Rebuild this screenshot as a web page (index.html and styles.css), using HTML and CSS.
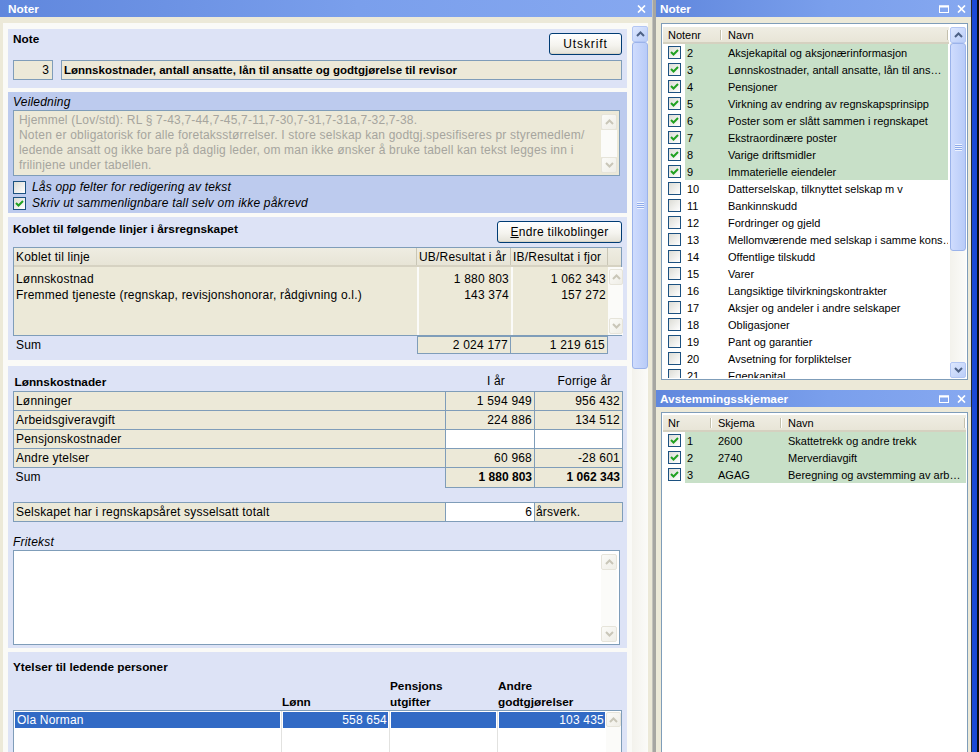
FILE: index.html
```html
<!DOCTYPE html>
<html lang="no">
<head>
<meta charset="utf-8">
<title>Noter</title>
<link rel="stylesheet" href="styles.css">
</head>
<body>
<svg class="defs" width="0" height="0" aria-hidden="true">
  <symbol id="i-up" viewBox="0 0 9 6"><polyline points="1,5 4.5,1.5 8,5" fill="none" stroke="currentColor" stroke-width="2"/></symbol>
  <symbol id="i-down" viewBox="0 0 9 6"><polyline points="1,1 4.5,4.5 8,1" fill="none" stroke="currentColor" stroke-width="2"/></symbol>
  <symbol id="i-check" viewBox="0 0 11 11"><polyline points="2,5 4.5,7.5 9,3" fill="none" stroke="#21a121" stroke-width="2"/></symbol>
  <symbol id="i-close" viewBox="0 0 9 8"><path d="M1 0.5 L8 7.5 M8 0.5 L1 7.5" stroke="#fff" stroke-width="1.7" fill="none"/></symbol>
  <symbol id="i-max" viewBox="0 0 10 8"><rect x="0.5" y="1" width="9" height="6.5" fill="none" stroke="#fff" stroke-width="1"/><rect x="0" y="0.5" width="10" height="2" fill="#fff"/></symbol>
</svg>

<div class="app">
  <section class="pane-left">
    <header class="titlebar tb-left">
      <span class="tb-title">Noter</span>
      <span class="tb-icons"><svg class="ic-close"><use href="#i-close"/></svg></span>
    </header>
    <div class="left-body">
      <div class="viewport">
        <div class="panels">

          <div class="panel p-note">
            <div class="note-top">
              <span class="lbl-bold">Note</span>
              <button class="xpbtn btn-print">Utskrift</button>
            </div>
            <div class="note-fields">
              <div class="field field-num">3</div>
              <div class="field field-title">Lønnskostnader, antall ansatte, lån til ansatte og godtgjørelse til revisor</div>
            </div>
          </div>

          <div class="panel p-guide">
            <div class="lbl-italic">Veiledning</div>
            <div class="memo memo-guide">
              <div class="memo-text">
                <div>Hjemmel (Lov/std): RL § 7-43,7-44,7-45,7-11,7-30,7-31,7-31a,7-32,7-38.</div>
                <div>Noten er obligatorisk for alle foretaksstørrelser. I store selskap kan godtgj.spesifiseres pr styremedlem/</div>
                <div>ledende ansatt og ikke bare på daglig leder, om man ikke ønsker å bruke tabell kan tekst legges inn i</div>
                <div>frilinjene under tabellen.</div>
              </div>
              <div class="sb sb-dis sb-memo">
                <span class="sb-btn"><svg class="chev"><use href="#i-up"/></svg></span>
                <span class="sb-track"></span>
                <span class="sb-btn"><svg class="chev"><use href="#i-down"/></svg></span>
              </div>
            </div>
            <div class="chk-row first"><span class="cb"></span><span>Lås opp felter for redigering av tekst</span></div>
            <div class="chk-row"><span class="cb"><svg class="ck"><use href="#i-check"/></svg></span><span>Skriv ut sammenlignbare tall selv om ikke påkrevd</span></div>
          </div>

          <div class="panel p-link">
            <div class="link-head">
              <span class="lbl-bold">Koblet til følgende linjer i årsregnskapet</span>
              <button class="xpbtn btn-link"><u>E</u>ndre tilkoblinger</button>
            </div>
            <div class="gbox">
              <div class="gb-header">
                <span class="gh gc1">Koblet til linje</span>
                <span class="gh gc2">UB/Resultat i år</span>
                <span class="gh gc3">IB/Resultat i fjor</span>
                <span class="gh gc4"></span>
              </div>
              <div class="gb-body">
                <div class="gb-rows">
                  <div class="gb-row"><span class="gc1">Lønnskostnad</span><span class="gc2 num">1 880 803</span><span class="gc3 num">1 062 343</span></div>
                  <div class="gb-row"><span class="gc1">Fremmed tjeneste (regnskap, revisjonshonorar, rådgivning o.l.)</span><span class="gc2 num">143 374</span><span class="gc3 num">157 272</span></div>
                  <div class="gb-row filler"><span class="gc1"></span><span class="gc2"></span><span class="gc3"></span></div>
                </div>
                <div class="sb sb-dis sb-grid">
                  <span class="sb-btn"><svg class="chev"><use href="#i-up"/></svg></span>
                  <span class="sb-track"></span>
                  <span class="sb-btn"><svg class="chev"><use href="#i-down"/></svg></span>
                </div>
              </div>
            </div>
            <div class="sum-row">
              <span class="sum-lbl">Sum</span>
              <span class="sum-cell sc-a">2 024 177</span>
              <span class="sum-cell sc-b">1 219 615</span>
            </div>
          </div>

          <div class="panel p-salary">
            <table class="sal">
              <colgroup><col class="col-lbl"><col class="col-v1"><col class="col-v2"></colgroup>
              <thead>
                <tr><th class="sal-title">Lønnskostnader</th><th class="sal-colh">I år</th><th class="sal-colh">Forrige år</th></tr>
              </thead>
              <tbody>
                <tr><td>Lønninger</td><td class="num">1 594 949</td><td class="num">956 432</td></tr>
                <tr><td>Arbeidsgiveravgift</td><td class="num">224 886</td><td class="num">134 512</td></tr>
                <tr><td>Pensjonskostnader</td><td class="num edit"></td><td class="num edit"></td></tr>
                <tr><td>Andre ytelser</td><td class="num">60 968</td><td class="num">-28 601</td></tr>
                <tr class="sum"><td class="sum-l">Sum</td><td class="num b">1 880 803</td><td class="num b">1 062 343</td></tr>
              </tbody>
            </table>
            <table class="sal emp">
              <colgroup><col class="col-lbl"><col class="col-v1"><col class="col-v2"></colgroup>
              <tbody>
                <tr><td>Selskapet har i regnskapsåret sysselsatt totalt</td><td class="num edit">6</td><td class="unit">årsverk.</td></tr>
              </tbody>
            </table>
            <div class="lbl-italic free-lbl">Fritekst</div>
            <div class="memo memo-free">
              <div class="memo-text"></div>
              <div class="sb sb-dis sb-memo">
                <span class="sb-btn"><svg class="chev"><use href="#i-up"/></svg></span>
                <span class="sb-track"></span>
                <span class="sb-btn"><svg class="chev"><use href="#i-down"/></svg></span>
              </div>
            </div>
          </div>

          <div class="panel p-exec">
            <div class="lbl-bold">Ytelser til ledende personer</div>
            <div class="exec-head">
              <span class="eh ec1"></span>
              <span class="eh ec2">Lønn</span>
              <span class="eh ec3">Pensjons<br>utgifter</span>
              <span class="eh ec4">Andre<br>godtgjørelser</span>
            </div>
            <div class="exec-box">
              <div class="exec-rows">
                <div class="exec-row sel">
                  <span class="ecell ec1"><span class="ev">Ola Norman</span></span>
                  <span class="ecell ec2"><span class="ev num">558 654</span></span>
                  <span class="ecell ec3"><span class="ev"></span></span>
                  <span class="ecell ec4"><span class="ev num">103 435</span></span>
                </div>
                <div class="exec-row filler">
                  <span class="ecell ec1"></span><span class="ecell ec2"></span><span class="ecell ec3"></span><span class="ecell ec4"></span>
                </div>
              </div>
              <div class="sb sb-dis sb-exec">
                <span class="sb-btn"><svg class="chev"><use href="#i-up"/></svg></span>
                <span class="sb-track"></span>
              </div>
            </div>
          </div>

        </div>
        <div class="sb sb-act sb-main">
          <span class="sb-btn"><svg class="chev"><use href="#i-up"/></svg></span>
          <span class="sb-track"><span class="sb-thumb th-main"><span class="grip"></span></span></span>
        </div>
      </div>
    </div>
  </section>

  <div class="splitter"></div>

  <section class="pane-right">
    <header class="titlebar tb-right">
      <span class="tb-title">Noter</span>
      <span class="tb-icons"><svg class="ic-max"><use href="#i-max"/></svg><svg class="ic-close"><use href="#i-close"/></svg></span>
    </header>
    <div class="rbody rbody-top">
      <div class="listbox lb-notes">
        <div class="lv">
          <div class="lv-header">
            <span class="lh lh-notenr">Notenr</span>
            <span class="lh lh-navn">Navn</span>
          </div>
          <div class="lv-rows">
            <div class="lv-row on"><span class="lv-cbc"><span class="cb"><svg class="ck"><use href="#i-check"/></svg></span></span><span class="lv-nr">2</span><span class="lv-name">Aksjekapital og aksjonærinformasjon</span></div>
            <div class="lv-row on"><span class="lv-cbc"><span class="cb"><svg class="ck"><use href="#i-check"/></svg></span></span><span class="lv-nr">3</span><span class="lv-name">Lønnskostnader, antall ansatte, lån til ans…</span></div>
            <div class="lv-row on"><span class="lv-cbc"><span class="cb"><svg class="ck"><use href="#i-check"/></svg></span></span><span class="lv-nr">4</span><span class="lv-name">Pensjoner</span></div>
            <div class="lv-row on"><span class="lv-cbc"><span class="cb"><svg class="ck"><use href="#i-check"/></svg></span></span><span class="lv-nr">5</span><span class="lv-name">Virkning av endring av regnskapsprinsipp</span></div>
            <div class="lv-row on"><span class="lv-cbc"><span class="cb"><svg class="ck"><use href="#i-check"/></svg></span></span><span class="lv-nr">6</span><span class="lv-name">Poster som er slått sammen i regnskapet</span></div>
            <div class="lv-row on"><span class="lv-cbc"><span class="cb"><svg class="ck"><use href="#i-check"/></svg></span></span><span class="lv-nr">7</span><span class="lv-name">Ekstraordinære poster</span></div>
            <div class="lv-row on"><span class="lv-cbc"><span class="cb"><svg class="ck"><use href="#i-check"/></svg></span></span><span class="lv-nr">8</span><span class="lv-name">Varige driftsmidler</span></div>
            <div class="lv-row on"><span class="lv-cbc"><span class="cb"><svg class="ck"><use href="#i-check"/></svg></span></span><span class="lv-nr">9</span><span class="lv-name">Immaterielle eiendeler</span></div>
            <div class="lv-row"><span class="lv-cbc"><span class="cb"></span></span><span class="lv-nr">10</span><span class="lv-name">Datterselskap, tilknyttet selskap m v</span></div>
            <div class="lv-row"><span class="lv-cbc"><span class="cb"></span></span><span class="lv-nr">11</span><span class="lv-name">Bankinnskudd</span></div>
            <div class="lv-row"><span class="lv-cbc"><span class="cb"></span></span><span class="lv-nr">12</span><span class="lv-name">Fordringer og gjeld</span></div>
            <div class="lv-row"><span class="lv-cbc"><span class="cb"></span></span><span class="lv-nr">13</span><span class="lv-name">Mellomværende med selskap i samme kons…</span></div>
            <div class="lv-row"><span class="lv-cbc"><span class="cb"></span></span><span class="lv-nr">14</span><span class="lv-name">Offentlige tilskudd</span></div>
            <div class="lv-row"><span class="lv-cbc"><span class="cb"></span></span><span class="lv-nr">15</span><span class="lv-name">Varer</span></div>
            <div class="lv-row"><span class="lv-cbc"><span class="cb"></span></span><span class="lv-nr">16</span><span class="lv-name">Langsiktige tilvirkningskontrakter</span></div>
            <div class="lv-row"><span class="lv-cbc"><span class="cb"></span></span><span class="lv-nr">17</span><span class="lv-name">Aksjer og andeler i andre selskaper</span></div>
            <div class="lv-row"><span class="lv-cbc"><span class="cb"></span></span><span class="lv-nr">18</span><span class="lv-name">Obligasjoner</span></div>
            <div class="lv-row"><span class="lv-cbc"><span class="cb"></span></span><span class="lv-nr">19</span><span class="lv-name">Pant og garantier</span></div>
            <div class="lv-row"><span class="lv-cbc"><span class="cb"></span></span><span class="lv-nr">20</span><span class="lv-name">Avsetning for forpliktelser</span></div>
            <div class="lv-row"><span class="lv-cbc"><span class="cb"></span></span><span class="lv-nr">21</span><span class="lv-name">Egenkapital</span></div>
          </div>
        </div>
        <div class="sb sb-act sb-list">
          <span class="sb-btn"><svg class="chev"><use href="#i-up"/></svg></span>
          <span class="sb-track"><span class="sb-thumb th-list"><span class="grip"></span></span></span>
          <span class="sb-btn"><svg class="chev"><use href="#i-down"/></svg></span>
        </div>
      </div>
    </div>
    <header class="titlebar tb-right">
      <span class="tb-title">Avstemmingsskjemaer</span>
      <span class="tb-icons"><svg class="ic-max"><use href="#i-max"/></svg><svg class="ic-close"><use href="#i-close"/></svg></span>
    </header>
    <div class="rbody rbody-bottom">
      <div class="listbox lb-schemes">
        <div class="lv">
          <div class="lv-header">
            <span class="lh lh-nr">Nr</span>
            <span class="lh lh-skjema">Skjema</span>
            <span class="lh lh-navn2">Navn</span>
          </div>
          <div class="lv-rows">
            <div class="lv-row on"><span class="lv-cbc"><span class="cb"><svg class="ck"><use href="#i-check"/></svg></span></span><span class="lv-nr2">1</span><span class="lv-sk">2600</span><span class="lv-name2">Skattetrekk og andre trekk</span></div>
            <div class="lv-row on"><span class="lv-cbc"><span class="cb"><svg class="ck"><use href="#i-check"/></svg></span></span><span class="lv-nr2">2</span><span class="lv-sk">2740</span><span class="lv-name2">Merverdiavgift</span></div>
            <div class="lv-row on"><span class="lv-cbc"><span class="cb"><svg class="ck"><use href="#i-check"/></svg></span></span><span class="lv-nr2">3</span><span class="lv-sk">AGAG</span><span class="lv-name2">Beregning og avstemming av arb…</span></div>
          </div>
        </div>
      </div>
    </div>
  </section>

  <div class="edge"></div>
</div>
</body>
</html>
```

FILE: styles.css
```css
* { box-sizing: border-box; margin: 0; padding: 0; }
html, body { width: 979px; height: 752px; overflow: hidden; }
body {
  font-family: "Liberation Sans", Arial, sans-serif;
  font-size: 12px;
  color: #000;
  background: #ece9d8;
}
.defs { position: absolute; width: 0; height: 0; overflow: hidden; }
.app { display: flex; height: 752px; }

/* ---------- title bars ---------- */
.titlebar {
  height: 17px;
  flex: none;
  display: flex;
  align-items: center;
  justify-content: space-between;
  background: linear-gradient(to right, #6087dd, #7a9fec 55%, #86a8f0);
  color: #fff;
  font-weight: bold;
  font-size: 11.8px;
  white-space: nowrap;
}
.tb-left { padding: 0 6px 0 8px; }
.tb-right { padding: 0 5px 0 4px; }
.tb-icons { display: flex; align-items: center; gap: 8px; }
.ic-close { width: 9px; height: 8px; display: block; }
.ic-max { width: 10px; height: 8px; display: block; }

/* ---------- left pane ---------- */
.pane-left { width: 652px; flex: none; display: flex; flex-direction: column; background: #ece9d8; }
.left-body { flex: 1; min-height: 0; display: flex; padding: 6px 4px 0 3px; }
.viewport { flex: 1; display: flex; background: #fafaf7; overflow: hidden; }
.panels { width: 619px; flex: none; margin: 6px 5px 0 5px; display: flex; flex-direction: column; }

.panel { background: #dde3f6; padding: 0 5px; flex: none; letter-spacing: 0.2px; }
.lbl-bold { font-weight: bold; font-size: 11.8px; letter-spacing: 0; line-height: 14px; white-space: nowrap; }
.lbl-italic { font-style: italic; line-height: 14px; }

/* Note panel */
.p-note { height: 59px; margin-bottom: 4px; padding-top: 4px; }
.note-top { display: flex; justify-content: space-between; align-items: flex-start; height: 22px; }
.note-top .lbl-bold { line-height: 12px; }
.note-fields { display: flex; gap: 8px; margin-top: 5px; }
.field {
  height: 20px; border: 1px solid #7f9db9; background: #ece9d8;
  display: flex; align-items: center; padding: 0 3px; white-space: nowrap; overflow: hidden;
}
.field-num { width: 40px; justify-content: flex-end; }
.field-title { flex: 1; font-weight: bold; font-size: 11.5px; letter-spacing: 0; padding-left: 2px; }

.xpbtn {
  font-family: inherit; font-size: 12px; color: #000;
  border: 1px solid #003c74; border-radius: 3px;
  background: linear-gradient(#ffffff, #f5f4ef 55%, #e4e2d8);
  box-shadow: inset 0 -1px 0 #d8d4c6;
  height: 22px; padding: 0; cursor: default;
}
.btn-print { width: 73px; letter-spacing: 0.9px; }
.btn-link { width: 125px; letter-spacing: 0.3px; }
.xpbtn u { text-decoration: underline; }

/* Veiledning panel */
.p-guide { height: 121px; margin-bottom: 4px; padding-top: 3px; background: #bdcbee; }
.memo { border: 1px solid #7f9db9; display: flex; width: 607px; }
.memo-guide { height: 66px; margin-top: 1px; background: #ece9d8; }
.memo-text { flex: 1; padding: 2px 0 0 5px; line-height: 15px; color: #a6a59e; white-space: nowrap; overflow: hidden; }
.chk-row { display: flex; align-items: center; gap: 6px; height: 16px; font-style: italic; }
.chk-row.first { margin-top: 3px; }

.cb {
  width: 13px; height: 13px; flex: none;
  border: 1px solid #1c5180;
  background: linear-gradient(135deg, #dcdcd5, #ffffff);
  display: inline-flex; align-items: center; justify-content: center;
}
.ck { width: 11px; height: 11px; display: block; }

/* scrollbars */
.sb { display: flex; flex-direction: column; flex: none; }
.sb-btn {
  height: 15px; flex: none; display: flex; align-items: center; justify-content: center;
  border-radius: 2px;
}
.chev { width: 9px; height: 6px; display: block; }
.sb-track { flex: 1; display: flex; flex-direction: column; }
.sb-dis .sb-btn { border: 1px solid #e6e4da; background: linear-gradient(135deg, #fbfbf8, #efeee7); color: #c9c6b8; }
.sb-dis .sb-track { background: #fbfbf9; }
.sb-act .sb-btn {
  border: 1px solid #b3c6f3;
  background: linear-gradient(135deg, #dde7fe, #bacdf8);
  color: #4d6185;
  height: 16px;
}
.sb-act .sb-track { background: linear-gradient(to right, #f3f2ec, #fbfbf9); }
.sb-thumb {
  flex: none; display: flex; align-items: center; justify-content: center;
  border: 1px solid #9bb3ea; border-radius: 3px;
  background: linear-gradient(to right, #cfdcfd, #b8cbf8);
}
.grip {
  width: 7px; height: 7px;
  background: repeating-linear-gradient(#eef3fe 0 1px, #8eaaea 1px 2px);
}
.sb-memo { width: 16px; margin: 3px 2px 2px 0; }
.sb-memo .sb-btn { height: 16px; }
.sb-main { width: 16px; margin-top: 3px; }
.th-main { height: 327px; }

/* Koblet panel */
.p-link { height: 143px; margin-bottom: 6px; padding-top: 4px; }
.link-head { display: flex; justify-content: space-between; align-items: flex-start; height: 26px; }
.link-head .lbl-bold { padding-top: 1px; }
.gbox { border: 1px solid #7f9db9; height: 89px; display: flex; flex-direction: column; background: #ece9d8; }
.gb-header {
  height: 19px; flex: none; display: flex;
  background: linear-gradient(#efede2, #e7e4d6);
  border-bottom: 2px solid #d6d2c2;
}
.gh { display: flex; align-items: center; padding-left: 2px; white-space: nowrap; border-right: 1px solid #c9c6b6; }
.gc1 { width: 403px; }
.gc2 { width: 94px; }
.gc3 { width: 97px; }
.gc4 { flex: 1; border-right: none; }
.gb-body { flex: 1; display: flex; min-height: 0; }
.gb-rows { flex: 1; display: flex; flex-direction: column; }
.gb-row { display: flex; height: 17px; line-height: 17px; flex: none; }
.gb-row:first-child { height: 20px; line-height: 20px; }
.gb-row:first-child span { padding-top: 2px; }
.gb-row span { white-space: nowrap; overflow: hidden; padding: 0 2px; }
.gb-row .gc2, .gb-row .gc3 { border-left: 2px solid #fbfbf9; }
.gb-row .gc1 { width: 403px; }
.gb-row .gc2 { width: 94px; }
.gb-row .gc3 { width: 97px; }
.gb-row.filler { flex: 1; }
.num { text-align: right; }
.sb-grid { width: 15px; background: #fbfbf9; border-left: 1px solid #fbfbf9; padding: 2px 0 1px 0; }
.sb-grid .sb-btn { height: 16px; }
.sum-row { display: flex; height: 18px; }
.sum-lbl { width: 404px; padding: 0 3px; line-height: 18px; }
.sum-cell {
  border: 1px solid #7f9db9; background: #ece9d8; text-align: right;
  padding: 0 2px; line-height: 16px;
}
.sc-a { width: 94px; }
.sc-b { width: 98px; margin-left: -1px; }

/* Lønnskostnader panel */
.p-salary { height: 282px; margin-bottom: 4px; }
.sal { width: 609px; border-collapse: collapse; table-layout: fixed; }
.col-lbl { width: 432px; }
.col-v1 { width: 89px; }
.col-v2 { width: 88px; }
.sal th { font-weight: normal; height: 25px; vertical-align: bottom; padding: 0 0 3px 0; text-align: left; }
.sal th.sal-title { font-weight: bold; font-size: 11.8px; letter-spacing: 0; padding-left: 1px; padding-bottom: 2px; }
.sal th.sal-colh { text-align: center; padding-left: 12px; }
.sal td {
  height: 19px; border: 1px solid #7f9db9; background: #ece9d8;
  padding: 0 2px; white-space: nowrap; overflow: hidden;
}
.sal td.edit { background: #fff; }
.sal td.b { font-weight: bold; letter-spacing: 0; }
.sal tr.sum td { height: 20px; }
.sal td.sum-l { border: none; background: transparent; }
.sal td.unit { padding-left: 1px; }
.sal.emp { margin-top: 14px; }
.free-lbl { margin-top: 13px; }
.memo-free { height: 95px; margin-top: 1px; background: #fff; }
.memo-free .sb-memo { margin-top: 3px; }

/* Ytelser panel */
.p-exec { flex: 1; padding-top: 8px; }
.exec-head { display: flex; margin-top: 3px; height: 33px; font-weight: bold; font-size: 11.8px; letter-spacing: 0; line-height: 16px; }
.eh { display: flex; align-items: flex-end; white-space: nowrap; }
.ec1 { width: 269px; }
.ec2 { width: 108px; }
.ec3 { width: 108px; }
.ec4 { width: 108px; }
.exec-box { border: 1px solid #7f9db9; background: #fff; display: flex; height: 60px; }
.exec-rows { flex: 1; display: flex; flex-direction: column; }
.exec-row { display: flex; flex: none; }
.exec-row.filler { flex: 1; }
.ecell { border-right: 1px solid #e2e2e0; padding: 1px 1px 0 1px; }
.exec-rows .ec1 { width: 268px; }
.exec-rows .ec2 { width: 108px; }
.exec-rows .ec3 { width: 108px; }
.exec-rows .ec4 { width: 108px; border-right: none; }
.ev { display: block; height: 16px; line-height: 16px; padding: 0 1px 0 2px; background: #316ac5; color: #fff; white-space: nowrap; }
.sb-exec { width: 16px; padding: 1px 1px 0 0; }
.sb-exec .sb-btn { height: 15px; }

/* ---------- splitter / edge ---------- */
.splitter { width: 4px; flex: none; background: #a6a6a2; border-left: 1px solid #c3c2bc; }
.edge { width: 8px; flex: none; background: #1b49d6; border-left: 1px solid #2a2a2a; border-right: 2px solid #0c0c10; }

/* ---------- right pane ---------- */
.pane-right { width: 315px; flex: none; display: flex; flex-direction: column; background: #ece9d8; font-size: 11px; }
.rbody { display: flex; flex-direction: column; padding: 0 3px 0 5px; }
.rbody-top { padding-top: 6px; padding-bottom: 10px; }
.rbody-bottom { flex: 1; min-height: 0; padding-top: 5px; }
.listbox { border: 1px solid #7f9db9; background: #fff; display: flex; gap: 1px; padding: 3px 1px 0 1px; overflow: hidden; }
.lb-notes { height: 357px; padding-bottom: 1px; }
.lb-schemes { flex: 1; margin-bottom: -6px; padding-top: 2px; }
.lv { flex: 1; display: flex; flex-direction: column; min-width: 0; overflow: hidden; }
.lv-header {
  height: 17px; flex: none; display: flex;
  background: linear-gradient(#efede3, #e8e5d7);
  border-bottom: 2px solid #d5d1c0;
}
.lh { display: flex; align-items: center; white-space: nowrap; position: relative; }
.lh::after {
  content: ""; position: absolute; right: 0; top: 3px; bottom: 2px;
  width: 1px; background: #c4c0ad; box-shadow: 1px 0 0 #fff;
}
.lh-notenr { width: 58px; padding-left: 5px; }
.lh-navn { width: 227px; padding-left: 7px; }
.lh-nr { width: 48px; padding-left: 5px; }
.lh-skjema { width: 70px; padding-left: 7px; }
.lh-navn2 { width: 184px; padding-left: 7px; }
.lv-rows { flex: 1; overflow: hidden; }
.lv-row { display: flex; height: 17px; align-items: stretch; }
.lv-row > span { display: flex; align-items: center; white-space: nowrap; overflow: hidden; }
.lv-cbc { width: 22px; flex: none; padding-left: 5px; background: #fff; }
.lv-nr { width: 36px; padding-left: 2px; }
.lv-name { width: 227px; padding-left: 7px; }
.lv-nr2 { width: 26px; padding-left: 2px; }
.lv-sk { width: 70px; padding-left: 7px; }
.lv-name2 { width: 185px; padding-left: 7px; }
.lv-row.on > span:not(.lv-cbc) { background: #c8e0c8; }
.sb-list { width: 16px; }
.th-list { height: 208px; }
```
